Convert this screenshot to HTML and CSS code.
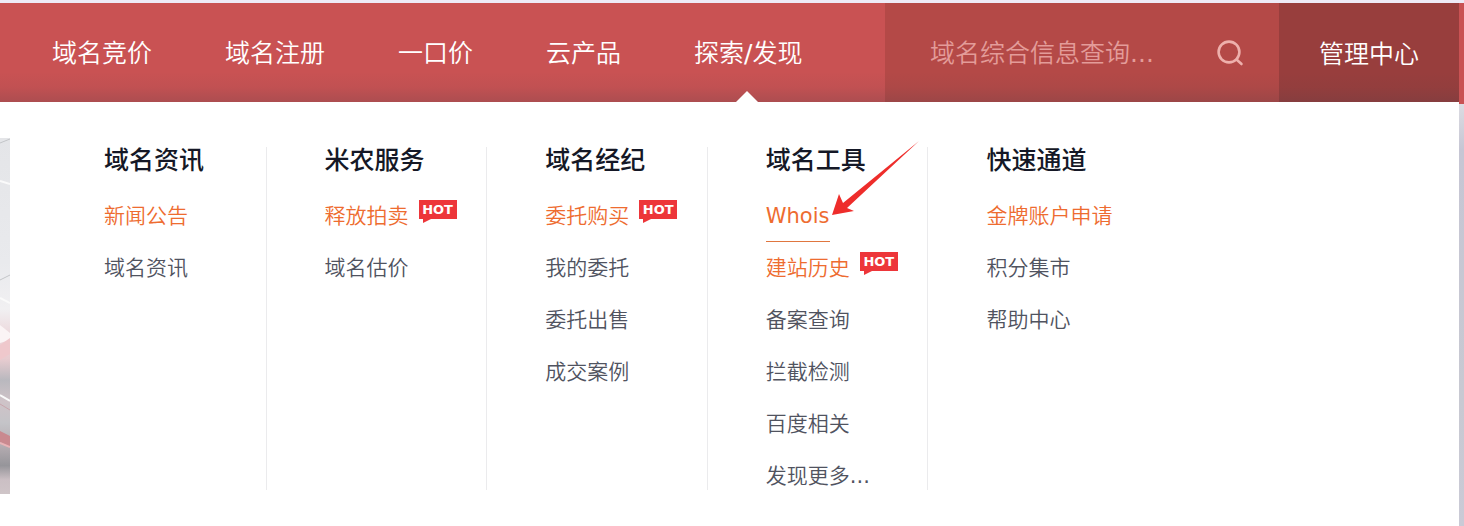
FILE: index.html
```html
<!DOCTYPE html>
<html lang="zh-CN">
<head>
    <meta charset="UTF-8">
    <meta name="viewport" content="width=device-width, initial-scale=1.0">
    <title>探索/发现</title>
    <link rel="stylesheet" href="styles.css">
</head>
<body>

    <!-- Header -->
    <header class="header">
        <div class="header-bar">
            <nav class="nav">
                <a href="#">域名竞价</a>
                <a href="#">域名注册</a>
                <a href="#">一口价</a>
                <a href="#">云产品</a>
                <a href="#" class="open">探索/发现</a>
            </nav>
            <form class="search">
                <input type="text" aria-label="域名综合信息查询" placeholder="域名综合信息查询...">
                <button type="submit" aria-label="查询">
                    <svg width="28" height="28" viewBox="0 0 28 28" fill="none" stroke="#eeb0ac" stroke-width="2.6" stroke-linecap="round">
                        <circle cx="13" cy="13" r="10.4"/>
                        <path d="M20.5 20.5L25.5 25"/>
                    </svg>
                </button>
            </form>
            <a href="#" class="manage">管理中心</a>
        </div>
    </header>

    <!-- Dropdown -->
    <main class="dropdown">
        <svg class="photo" viewBox="0 0 10 356" preserveAspectRatio="none">
            <defs>
                <linearGradient id="photo-bg" x1="0" y1="0" x2="0" y2="1">
                    <stop offset="0" stop-color="#e4e5e8"/>
                    <stop offset="0.35" stop-color="#e9eaed"/>
                    <stop offset="0.48" stop-color="#f1f0f2"/>
                    <stop offset="0.56" stop-color="#ecd6da"/>
                    <stop offset="0.62" stop-color="#e8ccd0"/>
                    <stop offset="0.68" stop-color="#b9b8be"/>
                    <stop offset="0.74" stop-color="#cfc3c8"/>
                    <stop offset="0.8" stop-color="#c4c4c8"/>
                    <stop offset="0.86" stop-color="#b7aeb3"/>
                    <stop offset="0.92" stop-color="#96959a"/>
                    <stop offset="0.96" stop-color="#cbbfc4"/>
                    <stop offset="1" stop-color="#cfc5c8"/>
                </linearGradient>
            </defs>
            <rect width="10" height="356" fill="url(#photo-bg)"/>
            <path d="M0 5L10 1M0 142L10 137" stroke="#c3c5c8"/>
            <path d="M0 43L10 46M0 160L10 165M0 257L10 263" stroke="#fafafa" stroke-width="2"/>
            <path d="M0 187L10 195V202L0 205Z" fill="#fbf4f5"/>
            <path d="M0 207L10 200V216L0 222Z" fill="#efc8cc"/>
            <path d="M0 266L10 272" stroke="#c9a5ac"/>
            <path d="M0 293L10 298V309L0 304Z" fill="#c9898f"/>
            <path d="M0 305L10 309" stroke="#e9b3b6" stroke-width="2"/>
        </svg>

        <div class="menu">
            <section class="column">
                <h2>域名资讯</h2>
                <ul>
                    <li><a href="#" class="accent">新闻公告</a></li>
                    <li><a href="#">域名资讯</a></li>
                </ul>
            </section>
            <section class="column">
                <h2>米农服务</h2>
                <ul>
                    <li><a href="#" class="accent">释放拍卖</a><span class="hot">HOT</span></li>
                    <li><a href="#">域名估价</a></li>
                </ul>
            </section>
            <section class="column">
                <h2>域名经纪</h2>
                <ul>
                    <li><a href="#" class="accent">委托购买</a><span class="hot">HOT</span></li>
                    <li><a href="#">我的委托</a></li>
                    <li><a href="#">委托出售</a></li>
                    <li><a href="#">成交案例</a></li>
                </ul>
            </section>
            <section class="column">
                <h2>域名工具</h2>
                <ul>
                    <li>
                        <a href="#" class="accent current">Whois
                            <svg class="arrow" width="90" height="76" viewBox="0 0 90 76">
                                <path d="M2 74L9 53L13 62L89 0L17 67L24 70Z" fill="#ee2d2b"/>
                            </svg>
                        </a>
                    </li>
                    <li><a href="#" class="accent">建站历史</a><span class="hot">HOT</span></li>
                    <li><a href="#">备案查询</a></li>
                    <li><a href="#">拦截检测</a></li>
                    <li><a href="#">百度相关</a></li>
                    <li><a href="#">发现更多...</a></li>
                </ul>
            </section>
            <section class="column">
                <h2>快速通道</h2>
                <ul>
                    <li><a href="#" class="accent">金牌账户申请</a></li>
                    <li><a href="#">积分集市</a></li>
                    <li><a href="#">帮助中心</a></li>
                </ul>
            </section>
        </div>
    </main>

</body>
</html>
```
FILE: styles.css
```css
/* Global Styles */
* {
    margin: 0;
    padding: 0;
    box-sizing: border-box;
}

body {
    min-height: 100vh;
    padding-top: 3px;
    background: linear-gradient(#eeeaf6 3px, #dcdce2 104px, #c6c6d4 150px, #c8c9d2 400px, #cacad6);
    font-family: "DejaVu Sans", "Noto Sans CJK SC DemiLight", "Noto Sans CJK SC", sans-serif;
    font-size: 21px;
    line-height: 28px;
}

a {
    color: #50535f;
    text-decoration: none;
}

/* Header */
.header {
    padding: 0 5px 2px 0;
    background: #c95253;
}

.header-bar {
    position: relative;
    display: flex;
    height: 99px;
    font-size: 25px;
}

.header-bar::before {
    content: "";
    position: absolute;
    inset: auto 0 0 0;
    height: 30px;
    background: linear-gradient(rgba(70, 60, 70, 0), rgba(70, 60, 70, 0.06) 50%, rgba(70, 60, 70, 0.22));
    pointer-events: none;
}

.nav {
    display: flex;
    flex: 1;
    gap: 73px;
    padding-left: 52px;
}

.nav a {
    position: relative;
    height: 99px;
    color: #fff;
    line-height: 102px;
    white-space: nowrap;
}

.nav .open::after {
    content: "";
    position: absolute;
    bottom: 0;
    left: calc(50% - 12px);
    border: 11px solid transparent;
    border-top: 0;
    border-bottom-color: #fff;
}

.search {
    display: flex;
    align-items: center;
    width: 394px;
    padding: 0 35px 0 45px;
    background: #b44947;
}

.search input {
    flex: 1;
    min-width: 0;
    padding-top: 2px;
    border: none;
    outline: none;
    background: none;
    color: #fff;
    font: inherit;
}

.search input::placeholder {
    color: #e39c99;
    opacity: 1;
}

.search button {
    display: flex;
    border: none;
    background: none;
    cursor: pointer;
}

.manage {
    width: 180px;
    height: 99px;
    background: #983e3d;
    color: #fff;
    line-height: 104px;
    text-align: center;
}

/* Dropdown */
.dropdown {
    position: relative;
    display: flex;
    gap: 36px;
    margin: -2px 5px 0 0;
    background: #fff;
}

.photo {
    width: 10px;
    height: 356px;
    margin-top: 36px;
}

.menu {
    display: grid;
    grid-template-columns: repeat(5, 1fr);
    flex: 1;
    max-width: 1103px;
    padding: 45px 0 36px;
}

.column {
    padding-left: 58px;
    border-right: 1px solid #ebebed;
    white-space: nowrap;
}

.column:last-child {
    border-right: none;
}

.column h2 {
    margin-bottom: 27px;
    color: #151826;
    font-family: "DejaVu Sans", "Noto Sans CJK SC", sans-serif;
    font-size: 25px;
    font-weight: 500;
    line-height: 28px;
}

.column ul {
    display: flex;
    flex-direction: column;
    gap: 24px;
    list-style: none;
}

.column li {
    display: flex;
    gap: 10px;
    height: 28px;
}

.column .accent {
    color: #ee6c30;
}

.current {
    position: relative;
}

.current::after {
    content: "";
    position: absolute;
    inset: auto 0 -12px 0;
    height: 1px;
    background: #e0763f;
}

.arrow {
    position: absolute;
    bottom: 13px;
    left: 100%;
}

/* Hot tag */
.hot {
    position: relative;
    width: 38px;
    height: 19px;
    margin-top: -2px;
    background: #ed363a;
    color: #fff;
    font-size: 13px;
    font-weight: bold;
    line-height: 19px;
    text-align: center;
}

.hot::after {
    content: "";
    position: absolute;
    top: 100%;
    left: 4px;
    border-top: 4px solid #ed363a;
    border-right: 8px solid transparent;
}
```
